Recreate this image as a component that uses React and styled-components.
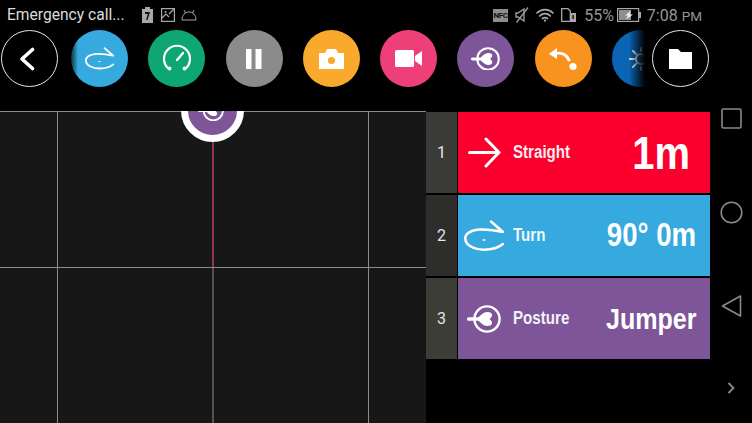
import React from 'react';
import styled, { createGlobalStyle } from 'styled-components';

const GlobalStyle = createGlobalStyle`
  html, body {
    margin: 0;
    background: #000;
    font-family: Roboto, "Liberation Sans", sans-serif;
  }
`;

const Screen = styled.div`
  width: 752px;
  height: 423px;
  background: #000;
  overflow: hidden;
  display: flex;
  flex-direction: column;
`;

/* status bar */
const StatusBar = styled.div`
  height: 30px;
  display: flex;
  align-items: center;
  justify-content: space-between;
  padding: 0 50px 0 7px;
  color: #9a9a9a;
`;

const StatusGroup = styled.div`
  display: flex;
  align-items: center;
  gap: ${(p) => p.$gap}px;
`;

const CarrierText = styled.span`
  color: #dcdcdc;
  font-size: 15.6px;
  margin-right: 9px;
`;

const BatteryText = styled.span`
  font-size: 16px;
  color: #969696;
  margin: 0 -4px 0 1px;
`;

const ClockText = styled.span`
  font-size: 16px;
  color: #969696;
  margin-left: -1px;
  small {
    font-size: 13.5px;
  }
`;

const NfcBadge = styled.span`
  width: 15px;
  height: 13px;
  background: #8e8e8e;
  color: #111;
  font-size: 8px;
  font-weight: 700;
  line-height: 13px;
  text-align: center;
  letter-spacing: -0.4px;
`;

/* toolbar */
const Toolbar = styled.div`
  height: 57px;
  padding-left: 1px;
  display: flex;
`;

const Circle = styled.div`
  flex: none;
  width: 57px;
  height: 57px;
  border-radius: 50%;
  background: ${(p) => p.$color};
  display: flex;
  align-items: center;
  justify-content: center;
`;

const OutlineCircle = styled(Circle)`
  box-sizing: border-box;
  background: #000;
  border: 1.5px solid #e6e6e6;
`;

const ActionStrip = styled.div`
  position: relative;
  width: 587px;
  margin-right: 7px;
  padding-left: 13px;
  box-sizing: border-box;
  overflow: hidden;
  display: flex;
  gap: 20.3px;

  &::before {
    content: '';
    position: absolute;
    left: 13px;
    top: 0;
    width: 7px;
    height: 100%;
    background: linear-gradient(90deg, rgba(0, 0, 0, 0.7), rgba(0, 0, 0, 0));
  }

  &::after {
    content: '';
    position: absolute;
    right: 0;
    top: 0;
    width: 16px;
    height: 100%;
    background: linear-gradient(90deg, rgba(0, 0, 0, 0), #000);
  }
`;

/* main area */
const Main = styled.div`
  margin-top: 24px;
  flex: 1;
  display: flex;
  min-height: 0;
`;

const Field = styled.div`
  position: relative;
  width: 426px;
  overflow: hidden;
  background-color: #171717;
  background-image:
    linear-gradient(90deg, #8c8c8c 1px, transparent 1px),
    linear-gradient(#8c8c8c 1px, transparent 1px);
  background-size: 155.5px 156px;
  background-position: 57px 0;
`;

const PathLine = styled.div`
  position: absolute;
  left: 212px;
  top: 28px;
  width: 1px;
  height: 128px;
  background: #d01840;
`;

const Marker = styled.div`
  position: absolute;
  left: 181px;
  top: -32px;
  box-sizing: border-box;
  width: 63px;
  height: 63px;
  border-radius: 50%;
  background: #7d5598;
  border: 7.5px solid #fff;
  display: flex;
  align-items: center;
  justify-content: center;
  padding-right: 4px;
`;

const Sequence = styled.div`
  width: 284px;
  padding-top: 1px;
  display: flex;
  flex-direction: column;
  gap: 2px;
`;

const Row = styled.div`
  height: 81px;
  display: flex;
  gap: 1px;
`;

const RowIndex = styled.div`
  width: 31px;
  background: ${(p) => p.$bg};
  color: #e4e4e4;
  font-size: 16px;
  display: flex;
  align-items: center;
  justify-content: center;
`;

const RowBody = styled.div`
  flex: 1;
  background: ${(p) => p.$color};
  color: #fff;
  display: flex;
  align-items: center;
  padding-right: ${(p) => p.$pad}px;
`;

const RowIcon = styled.div`
  width: 55px;
  flex: none;
  display: flex;
  justify-content: center;
  padding-right: 3px;
  box-sizing: border-box;
`;

const RowLabel = styled.span`
  flex: 1;
  font-family: "Liberation Sans", sans-serif;
  font-weight: 700;
  font-size: 18px;
  opacity: 0.92;
  transform: scaleX(0.84);
  transform-origin: left center;
`;

const RowValue = styled.span`
  font-family: "Liberation Sans", sans-serif;
  font-weight: 700;
  font-size: ${(p) => p.$size}px;
  transform: scaleX(0.85);
  transform-origin: right center;
`;

const NavBar = styled.div`
  flex: 1;
  margin-top: -40px;
  display: flex;
  flex-direction: column;
  align-items: center;
`;

const NavSlot = styled.div`
  height: ${(p) => p.$h || 94}px;
  flex: none;
  display: flex;
  align-items: center;
  justify-content: center;
`;

/* icons */
const TurnIcon = ({ width }) => (
  <svg width={width} viewBox="0 0 40 31" fill="none" stroke="#fff" strokeWidth="2.5" strokeLinecap="round" strokeLinejoin="round" style={{ display: 'block' }}>
    <path d="M27 1.5 L39 12 C30 10 22 9 15 9.5 C6 10.5 1.3 14 1.3 18.5 C1.3 25 10 29.7 20 29.7 C28 29.7 34 28 39 24" />
    <path d="M19 20 H21" strokeWidth="1.3" />
  </svg>
);

const PostureIcon = ({ width }) => (
  <svg width={width} viewBox="0 0 34 28" style={{ display: 'block' }}>
    <circle cx="20" cy="14" r="12.6" fill="none" stroke="#fff" strokeWidth="2.4" />
    <rect x="0" y="12.2" width="12" height="3.6" rx="1.6" fill="#fff" />
    <path d="M9 14 C13 12 15 7 20.5 7 C25 7 27 10.5 22.5 14 C27 17.5 25 21 20.5 21 C15 21 13 16 9 14Z" fill="#fff" />
  </svg>
);

const StraightIcon = () => (
  <svg width="33" height="31" viewBox="0 0 33 31" fill="none" stroke="#fff" strokeWidth="3" strokeLinecap="round" strokeLinejoin="round" style={{ display: 'block' }}>
    <path d="M1.5 15.5 H31 M18 2 L31 15.5 L18 29" />
  </svg>
);

const BackChevron = () => (
  <svg width="16" height="24" viewBox="0 0 16 24" fill="none" stroke="#fff" strokeWidth="3.6" strokeLinecap="round" strokeLinejoin="round" style={{ marginRight: 6 }}>
    <path d="M13.5 2.5 L3 12 L13.5 21.5" />
  </svg>
);

const GaugeIcon = () => (
  <svg width="30" height="30" viewBox="0 0 30 30" fill="none" stroke="#fff" strokeWidth="2.2" strokeLinecap="round">
    <path d="M7 25 A13 13 0 1 1 23 25" />
    <path d="M15 16 L21 9" strokeWidth="2.4" />
    <circle cx="7.5" cy="24.5" r="1.9" fill="#fff" stroke="none" />
    <circle cx="22.5" cy="24.5" r="1.9" fill="#fff" stroke="none" />
  </svg>
);

const PauseIcon = () => (
  <svg width="16" height="20" viewBox="0 0 16 20" fill="#fff">
    <rect x="0" width="5.5" height="20" />
    <rect x="9.5" width="6" height="20" />
  </svg>
);

const CameraIcon = () => (
  <svg width="25" height="20" viewBox="0 0 25 20">
    <path d="M0 4 H6 L8 0 H17 L19 4 H25 V20 H0Z" fill="#fff" />
    <circle cx="12.5" cy="11.5" r="3.6" fill="#f9a92b" />
  </svg>
);

const VideoIcon = () => (
  <svg width="27" height="17" viewBox="0 0 27 17" fill="#fff">
    <rect x="0" y="0" width="19" height="17" rx="1.5" />
    <path d="M20 6 L27 1 V16 L20 11Z" />
  </svg>
);

const ReturnIcon = () => (
  <svg width="29" height="24" viewBox="0 0 29 24" fill="none">
    <path d="M5 7 C11 5 17 7 20 13" stroke="#fff" strokeWidth="3" strokeLinecap="round" />
    <path d="M0 7 L8 1 L8 12Z" fill="#fff" />
    <circle cx="24" cy="19.5" r="3.6" fill="#fff" />
  </svg>
);

const SunIcon = () => (
  <svg width="24" height="24" viewBox="0 0 24 24" fill="none" stroke="#dff0fb" strokeWidth="2" strokeLinecap="round">
    <path d="M1 12 H5 M4 4 L7 7 M4 20 L7 17 M12 1 V4 M12 20 V23 M20 4 L17 7 M20 20 L17 17 M19 12 H23" />
    <circle cx="12" cy="12" r="5" />
  </svg>
);

const FolderIcon = () => (
  <svg width="23" height="20" viewBox="0 0 23 20" fill="#fff">
    <path d="M0 0 H9 L12 3 H23 V20 H0Z" />
  </svg>
);

const BatteryChargeIcon = () => (
  <svg width="11" height="16" viewBox="0 0 11 16">
    <path d="M3 0 H8 V2 H11 V16 H0 V2 H3Z" fill="#a8a8a8" />
    <path d="M3 5 H8 L5.5 13 H4 L5.8 7 H3Z" fill="#111" />
  </svg>
);

const PictureIcon = () => (
  <svg width="14" height="14" viewBox="0 0 14 14" fill="none" stroke="#a8a8a8" strokeWidth="1.2">
    <rect x="0.6" y="0.6" width="12.8" height="12.8" />
    <path d="M1 10 L5 6 L8 9 M8 6 L13 1" />
    <circle cx="4.5" cy="4" r="1" fill="#a8a8a8" stroke="none" />
  </svg>
);

const AndroidIcon = () => (
  <svg width="16" height="12" viewBox="0 0 16 12" fill="none" stroke="#a8a8a8" strokeWidth="1" style={{ marginLeft: -2 }}>
    <path d="M1 11 C1 6 4 3 8 3 C12 3 15 6 15 11Z" />
    <path d="M4.5 4 L3 1 M11.5 4 L13 1" />
  </svg>
);

const MuteIcon = () => (
  <svg width="14" height="16" viewBox="0 0 14 16" fill="none" stroke="#9a9a9a" strokeWidth="1.4">
    <path d="M3 6 H1 V10 H3 L9 14 V2Z" />
    <path d="M13 0.5 L1.5 15.5" />
  </svg>
);

const WifiIcon = () => (
  <svg width="18" height="14" viewBox="0 0 18 14" fill="none" stroke="#a8a8a8" strokeWidth="1.7" strokeLinecap="round">
    <path d="M1 5 C5.5 0.5 12.5 0.5 17 5 M3.8 7.8 C6.8 5 11.2 5 14.2 7.8 M6.5 10.5 C8 9.4 10 9.4 11.5 10.5" />
    <circle cx="9" cy="12.7" r="1.1" fill="#a8a8a8" stroke="none" />
  </svg>
);

const SimIcon = () => (
  <svg width="15" height="14" viewBox="0 0 15 14">
    <path d="M0.7 0.7 H7 L9.3 3 V13.3 H0.7Z" fill="none" stroke="#a8a8a8" strokeWidth="1.3" />
    <rect x="9" y="5" width="6" height="9" fill="#a8a8a8" />
    <rect x="11.4" y="7" width="1.4" height="4" fill="#111" />
  </svg>
);

const BatteryIcon = () => (
  <svg width="24" height="14" viewBox="0 0 24 14">
    <rect x="0.6" y="0.6" width="21" height="12.8" fill="none" stroke="#a8a8a8" strokeWidth="1.2" />
    <rect x="2" y="2" width="12" height="10" fill="#8e8e8e" />
    <rect x="22" y="4" width="2" height="6" fill="#a8a8a8" />
    <path d="M14 2.5 L8 7.5 H11 L9 11.5 L16 6.5 H12.5Z" fill="#eee" />
  </svg>
);

const NavSquare = () => (
  <svg width="21" height="21" viewBox="0 0 21 21" fill="none" stroke="#8a8a8a" strokeWidth="1.6">
    <rect x="1" y="1" width="19" height="19" rx="1.5" />
  </svg>
);

const NavCircle = () => (
  <svg width="23" height="23" viewBox="0 0 23 23" fill="none" stroke="#8a8a8a" strokeWidth="1.6">
    <circle cx="11.5" cy="11.5" r="10.3" />
  </svg>
);

const NavTriangle = () => (
  <svg width="21" height="22" viewBox="0 0 21 22" fill="none" stroke="#8a8a8a" strokeWidth="1.6" strokeLinejoin="round">
    <path d="M19.5 1 V21 L1.5 11Z" />
  </svg>
);

const NavChevron = () => (
  <svg width="8" height="12" viewBox="0 0 8 12" fill="none" stroke="#8a8a8a" strokeWidth="1.8">
    <path d="M1.5 1 L6.5 6 L1.5 11" />
  </svg>
);

const rows = [
  { n: 1, bg: '#3a3a36', color: '#fb002c', icon: <StraightIcon />, label: 'Straight', value: '1m', size: 47, pad: 20 },
  { n: 2, bg: '#2d2d2c', color: '#36a9de', icon: <TurnIcon width={40} />, label: 'Turn', value: '90° 0m', size: 32.5, pad: 14 },
  { n: 3, bg: '#3d3d38', color: '#7d5598', icon: <PostureIcon width={34} />, label: 'Posture', value: 'Jumper', size: 29.5, pad: 13 },
];

const App = () => {
  return (
    <Screen>
      <GlobalStyle />
      <StatusBar>
        <StatusGroup $gap={8}>
          <CarrierText>Emergency call...</CarrierText>
          <BatteryChargeIcon />
          <PictureIcon />
          <AndroidIcon />
        </StatusGroup>
        <StatusGroup $gap={7}>
          <NfcBadge>NFC</NfcBadge>
          <MuteIcon />
          <WifiIcon />
          <SimIcon />
          <BatteryText>55%</BatteryText>
          <BatteryIcon />
          <ClockText>7:08 <small>PM</small></ClockText>
        </StatusGroup>
      </StatusBar>

      <Toolbar>
        <OutlineCircle><BackChevron /></OutlineCircle>
        <ActionStrip>
          <Circle $color="#36a9de"><TurnIcon width={29} /></Circle>
          <Circle $color="#0ea673"><GaugeIcon /></Circle>
          <Circle $color="#8b8b8b"><PauseIcon /></Circle>
          <Circle $color="#f9a92b"><CameraIcon /></Circle>
          <Circle $color="#ee3f79"><VideoIcon /></Circle>
          <Circle $color="#7d5598"><PostureIcon width={29} /></Circle>
          <Circle $color="#f7931e"><ReturnIcon /></Circle>
          <Circle $color="#0b64b4"><SunIcon /></Circle>
        </ActionStrip>
        <OutlineCircle><FolderIcon /></OutlineCircle>
      </Toolbar>

      <Main>
        <Field>
          <PathLine />
          <Marker><PostureIcon width={26} /></Marker>
        </Field>
        <Sequence>
          {rows.map((r) => (
            <Row key={r.n}>
              <RowIndex $bg={r.bg}>{r.n}</RowIndex>
              <RowBody $color={r.color} $pad={r.pad}>
                <RowIcon>{r.icon}</RowIcon>
                <RowLabel>{r.label}</RowLabel>
                <RowValue $size={r.size}>{r.value}</RowValue>
              </RowBody>
            </Row>
          ))}
        </Sequence>
        <NavBar>
          <NavSlot><NavSquare /></NavSlot>
          <NavSlot><NavCircle /></NavSlot>
          <NavSlot><NavTriangle /></NavSlot>
          <NavSlot $h={70}><NavChevron /></NavSlot>
        </NavBar>
      </Main>
    </Screen>
  );
};

export default App;
